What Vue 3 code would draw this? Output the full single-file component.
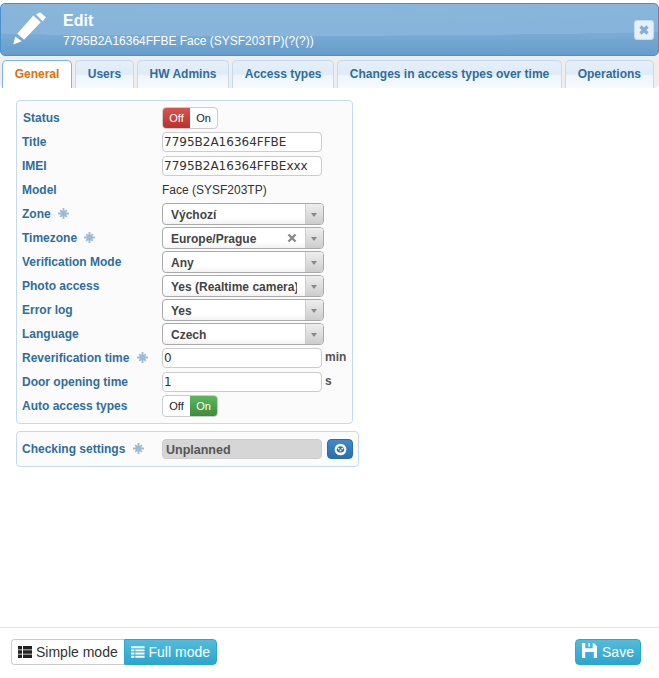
<script setup>
const tabs = [
  { label: 'General', active: true },
  { label: 'Users' },
  { label: 'HW Admins' },
  { label: 'Access types' },
  { label: 'Changes in access types over time' },
  { label: 'Operations' },
];
</script>

<template>
  <div class="page">
    <header class="head">
      <svg class="pencil" viewBox="0 0 36 36" width="36" height="36">
        <path d="M1.300 32.500L3.300 24.500L9.700 29.200zM5.300 21.800L12 27.800L28.700 10.200L21.300 3.500zM24 2.500L30.700 9.200L34 5.200L28 .2z" fill="#fff" />
      </svg>
      <div class="head-text">
        <div class="head-title">Edit</div>
        <div class="head-sub">7795B2A16364FFBE Face (SYSF203TP)(?(?))</div>
      </div>
      <button class="close">
        <svg viewBox="0 0 12 12" width="12" height="12"><path d="M2.500 2.500l7 7M9.500 2.500l-7 7" stroke="#86aecf" stroke-width="3.200" /></svg>
      </button>
    </header>

    <nav class="tabs">
      <a v-for="t in tabs" :key="t.label" class="tab" :class="{ active: t.active }">{{ t.label }}</a>
    </nav>

    <main class="content">
      <section class="panel main-panel">
        <div class="row">
          <label class="status-label">Status</label>
          <div class="toggle">
            <span class="off-on red">Off</span><span class="off-on">On</span>
          </div>
        </div>
        <div class="row"><label>Title</label><input class="inp" value="7795B2A16364FFBE" /></div>
        <div class="row"><label>IMEI</label><input class="inp" value="7795B2A16364FFBExxx" /></div>
        <div class="row"><label>Model</label><span class="plain">Face (SYSF203TP)</span></div>
        <div class="row">
          <label>Zone <svg class="flake" viewBox="0 0 12 12"><use href="#flk" /></svg></label>
          <div class="sel"><span class="sel-text">Výchozí</span><span class="sel-arrow"></span></div>
        </div>
        <div class="row">
          <label>Timezone <svg class="flake" viewBox="0 0 12 12"><use href="#flk" /></svg></label>
          <div class="sel">
            <span class="sel-text">Europe/Prague</span>
            <svg class="sel-x" viewBox="0 0 10 10" width="10" height="10"><path d="M1.500 1.500l7 7M8.500 1.500l-7 7" stroke="#888" stroke-width="2.400" /></svg>
            <span class="sel-arrow"></span>
          </div>
        </div>
        <div class="row"><label>Verification Mode</label><div class="sel"><span class="sel-text">Any</span><span class="sel-arrow"></span></div></div>
        <div class="row"><label>Photo access</label><div class="sel"><span class="sel-text">Yes (Realtime camera)</span><span class="sel-arrow"></span></div></div>
        <div class="row"><label>Error log</label><div class="sel"><span class="sel-text">Yes</span><span class="sel-arrow"></span></div></div>
        <div class="row"><label>Language</label><div class="sel"><span class="sel-text">Czech</span><span class="sel-arrow"></span></div></div>
        <div class="row">
          <label>Reverification time <svg class="flake" viewBox="0 0 12 12"><use href="#flk" /></svg></label>
          <input class="inp" value="0" /><span class="unit">min</span>
        </div>
        <div class="row"><label>Door opening time</label><input class="inp" value="1" /><span class="unit">s</span></div>
        <div class="row">
          <label>Auto access types</label>
          <div class="toggle">
            <span class="off-on">Off</span><span class="off-on green">On</span>
          </div>
        </div>
      </section>

      <section class="panel check-panel">
        <div class="row">
          <label>Checking settings <svg class="flake" viewBox="0 0 12 12"><use href="#flk" /></svg></label>
          <div class="readonly">Unplanned</div>
          <button class="dash">
            <svg viewBox="0 0 14 14" width="13" height="13">
              <circle cx="7" cy="7" r="6.300" fill="#fff" />
              <path d="M3 8.500a4.100 4.100 0 1 1 8 0c-.8 1-2.300 1.600-4 1.600s-3.200-.6-4-1.600z" fill="#2f71ad" />
              <circle cx="5" cy="6" r="1" fill="#fff" />
              <circle cx="9" cy="6" r="1" fill="#fff" />
              <circle cx="7" cy="8" r="1" fill="#fff" />
            </svg>
          </button>
        </div>
      </section>
    </main>

    <footer class="foot">
      <div class="modes">
        <button class="mode">
          <svg viewBox="0 0 14 12" width="14" height="12">
            <path fill="#222" d="M0 0h4v3.400H0zM5 0h9v3.400H5zM0 4.300h4v3.400H0zM5 4.300h9v3.400H5zM0 8.600h4V12H0zM5 8.600h9V12H5z" />
          </svg>
          Simple mode
        </button>
        <button class="mode on">
          <svg viewBox="0 0 14 12" width="14" height="12">
            <path fill="#fff" d="M0 0h14v2H0zM0 3.300h3.500v2H0zM4.500 3.300H14v2H4.500zM0 6.600h3.500v2H0zM4.500 6.600H14v2H4.500zM0 10h3.500v2H0zM4.500 10H14v2H4.500z" />
          </svg>
          Full mode
        </button>
      </div>
      <button class="save">
        <svg class="save-icon" viewBox="0 0 14 14" width="15" height="15">
          <path fill="#fff" fill-rule="evenodd" d="M0 0h11l3 3v11H0zM3 0v5h7V0H7.500v3.500H6V0zM3 8.500V14h8V8.500z" />
        </svg>
        Save
      </button>
    </footer>

    <svg width="0" height="0" class="defs">
      <defs>
        <g id="flk" fill="#9dbbd6">
          <circle cx="6" cy="6" r="3.200" />
          <path d="M5 0h2v12H5zM0 5h12v2H0zM1.700 3.100l1.400-1.400 7.200 7.200-1.400 1.400zM8.900 1.700l1.400 1.400-7.200 7.200-1.400-1.400z" />
        </g>
      </defs>
    </svg>
  </div>
</template>

<style>
html, body { margin: 0; background: #fff; }
</style>

<style scoped>
.page {
  width: 659px;
  height: 678px;
  display: flex;
  flex-direction: column;
  font-family: "Liberation Sans", Arial, sans-serif;
  font-size: 12px;
  overflow: hidden;
  background: #fff;
  position: relative;
}
.defs { position: absolute; }
.head {
  height: 53px;
  margin-top: 3px;
  width: 659px;
  box-sizing: border-box;
  border: 1px solid #4a90cf;
  border-radius: 5px;
  display: flex;
  align-items: center;
  padding: 0 4px 0 11px;
  color: #fff;
  background:
    radial-gradient(ellipse 900px 40px at 42% -8px, #8ab7db 0, #86b4da 99.400%, rgba(134, 180, 218, 0) 100%),
    linear-gradient(#79abd4 0, #79abd4 60%, #659dcb 100%);
}
.pencil { flex: none; }
.head-text { margin-left: 15px; flex: 1; padding-top: 2px; }
.head-title { font-size: 16px; font-weight: 700; line-height: 20px; }
.head-sub { font-size: 12px; line-height: 17px; margin-top: 2px; }
.close {
  width: 20px;
  height: 20px;
  padding: 0;
  border: 1px solid #c6dcee;
  border-radius: 3px;
  background: #e6f0f9;
  display: flex;
  align-items: center;
  justify-content: center;
}
.tabs {
  height: 32px;
  background: #eeeeee;
  border-radius: 0 0 5px 5px;
  display: flex;
  align-items: flex-end;
  padding-left: 2px;
  gap: 3px;
  box-sizing: border-box;
}
.tab {
  height: 28px;
  box-sizing: border-box;
  border: 1px solid #c5dbec;
  border-bottom: 0;
  border-radius: 5px 5px 0 0;
  padding: 0 11.700px;
  line-height: 27px;
  font-weight: 700;
  color: #2e6e9e;
  background: linear-gradient(#e4eff9 0, #dfebf7 48%, #eef5fc 55%, #f6fafe 100%);
  white-space: nowrap;
}
.tab.active {
  color: #e17009;
  background: #fff;
  border-color: #79b7e7;
}
.content {
  flex: 1;
  padding: 12px 16px 0;
}
.panel {
  box-sizing: border-box;
  border: 1px solid #c5dbec;
  border-radius: 4px;
  background: #fbfbfb;
  padding: 5px;
}
.main-panel { width: 337px; height: 324px; }
.check-panel { width: 343px; height: 36px; margin-top: 7px; }
.row {
  height: 24px;
  display: flex;
  align-items: center;
  white-space: nowrap;
}
label {
  width: 140px;
  flex: none;
  font-weight: 700;
  color: #2e6e9e;
  line-height: 14px;
}
.status-label { padding-left: 1px; box-sizing: border-box; }
.flake { width: 11px; height: 11px; margin-left: 4px; vertical-align: -1px; }
.inp {
  width: 160px;
  height: 20px;
  box-sizing: border-box;
  border: 1px solid #ccc;
  border-radius: 4px;
  padding: 0 1px;
  font: 12px "DejaVu Sans", sans-serif;
  color: #333;
  background: #fff;
  outline: none;
}
.plain { font-weight: 400; color: #333; font-size: 12px; }
.unit { margin-left: 3px; font-weight: 700; color: #555; margin-top: -3px; }
.toggle {
  display: flex;
  height: 22px;
  width: 56px;
  box-sizing: border-box;
  border: 1px solid #ccc;
  border-radius: 4px;
  overflow: hidden;
  background: #fff;
  font-size: 11px;
}
.off-on { flex: 1; text-align: center; line-height: 20px; color: #222; }
.off-on.red { background: linear-gradient(#d9534f, #b8312d); color: #fff; }
.off-on.green { background: linear-gradient(#5cb85c, #3d8b3d); color: #fff; }
.sel {
  width: 162px;
  height: 22px;
  box-sizing: border-box;
  border: 1px solid #aaa;
  border-radius: 4px;
  display: flex;
  align-items: center;
  background: linear-gradient(#fff 70%, #f2f2f2);
  position: relative;
}
.sel-text {
  flex: 1;
  min-width: 0;
  margin: 0 8px 0 8px;
  padding-top: 1px;
  font-weight: 700;
  color: #444;
  overflow: hidden;
}
.sel-x { flex: none; margin-right: 8px; }
.sel-arrow {
  width: 17px;
  height: 20px;
  flex: none;
  border-left: 1px solid #ccc;
  background: linear-gradient(#eee, #ccc);
  border-radius: 0 3px 3px 0;
  position: relative;
}
.sel-arrow::after {
  content: "";
  position: absolute;
  left: 5px;
  top: 9px;
  border: 3.500px solid transparent;
  border-top: 4px solid #888;
  border-bottom: 0;
}
.readonly {
  width: 160px;
  height: 20px;
  box-sizing: border-box;
  border: 1px solid #ccc;
  border-radius: 4px;
  background: #d6d6d6;
  color: #555;
  font-weight: 700;
  padding: 1px 0 0 3px;
  line-height: 19px;
  font-size: 12.500px;
}
.dash {
  width: 26px;
  height: 20px;
  margin-left: 5px;
  padding: 0;
  border: 1px solid #2e6da4;
  border-radius: 4px;
  background: linear-gradient(#428bca, #2a6ead);
  display: flex;
  align-items: center;
  justify-content: center;
}
.foot {
  height: 51px;
  box-sizing: border-box;
  border-top: 1px solid #e4e4e4;
  display: flex;
  justify-content: space-between;
  align-items: flex-start;
  padding: 11px 18px 0 11px;
}
.modes { display: flex; }
.mode, .save {
  height: 26px;
  box-sizing: border-box;
  font: 14px "Liberation Sans", Arial, sans-serif;
  display: flex;
  align-items: center;
  gap: 4px;
  padding: 0 6px;
  white-space: nowrap;
}
.mode {
  border: 1px solid #ccc;
  border-right: 0;
  border-radius: 4px 0 0 4px;
  background: #fff;
  color: #333;
  width: 113px;
}
.mode.on {
  width: 93px;
  border: 1px solid #2ea7cf;
  border-radius: 0 4px 4px 0;
  background: linear-gradient(#54bbdc, #2aa6d0);
  color: #fff;
}
.save {
  width: 66px;
  border: 1px solid #2ea7cf;
  border-radius: 4px;
  background: linear-gradient(#54bbdc, #2aa6d0);
  color: #fff;
  justify-content: center;
  gap: 5px;
}
.save-icon { margin-top: -4px; }
</style>
